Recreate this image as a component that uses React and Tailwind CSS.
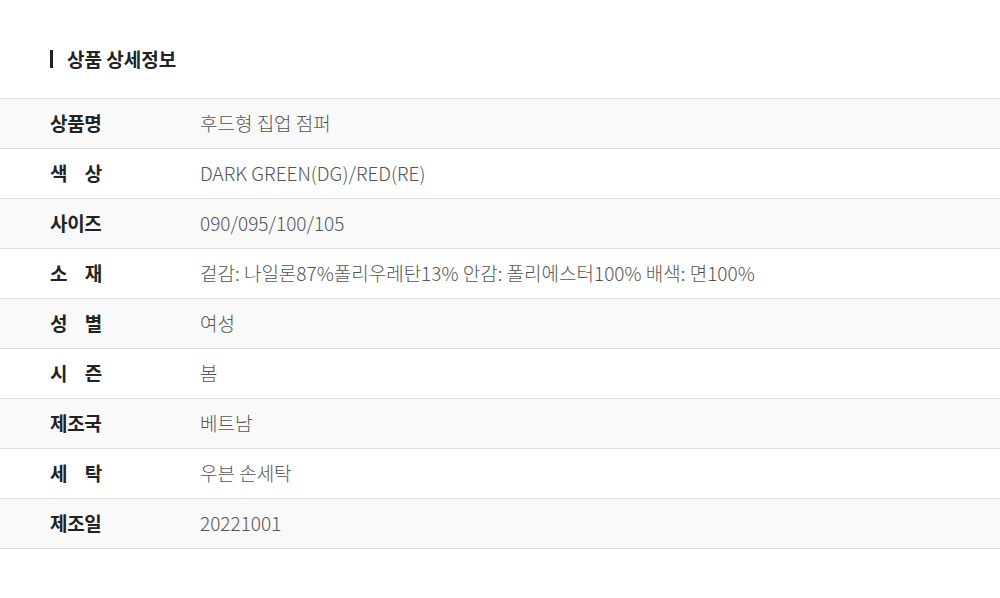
import React from "react";

const rows = [
  ["상품명", "후드형 집업 점퍼"],
  ["색상", "DARK GREEN(DG)/RED(RE)"],
  ["사이즈", "090/095/100/105"],
  ["소재", "겉감: 나일론87%폴리우레탄13% 안감: 폴리에스터100% 배색: 면100%"],
  ["성별", "여성"],
  ["시즌", "봄"],
  ["제조국", "베트남"],
  ["세탁", "우븐 손세탁"],
  ["제조일", "20221001"],
];

function Label({ text }) {
  if (text.length === 2) {
    return (
      <div className="flex w-[52px] justify-between">
        <span>{text[0]}</span>
        <span>{text[1]}</span>
      </div>
    );
  }
  return <div className="w-[60px] whitespace-nowrap">{text}</div>;
}

export default function App() {
  return (
    <div
      className="w-[1000px] h-[598px] bg-white"
      style={{ fontFamily: '"Noto Sans CJK KR", "Noto Sans", sans-serif' }}
    >
      <div className="pt-[47px] pb-[27px] pl-[50px] flex items-center">
        <div className="w-[3px] h-[18px] bg-[#222]" />
        <h2 className="ml-[14px] text-[19px] leading-[24px] font-bold tracking-[0px] text-[#222]">
          상품 상세정보
        </h2>
      </div>
      <div className="border-t border-[#dedede]">
        {rows.map(([k, v], i) => (
          <div
            key={k}
            className={`flex items-center h-[50px] border-b border-[#dedede] ${
              i % 2 === 0 ? "bg-[#f9f9f9]" : "bg-white"
            }`}
          >
            <div className="w-[200px] pl-[50px] text-[19px] font-bold text-[#222] tracking-[-0.3px]">
              <Label text={k} />
            </div>
            <div className="text-[19px] text-[#555] tracking-[0px] font-light">
              {v}
            </div>
          </div>
        ))}
      </div>
    </div>
  );
}
